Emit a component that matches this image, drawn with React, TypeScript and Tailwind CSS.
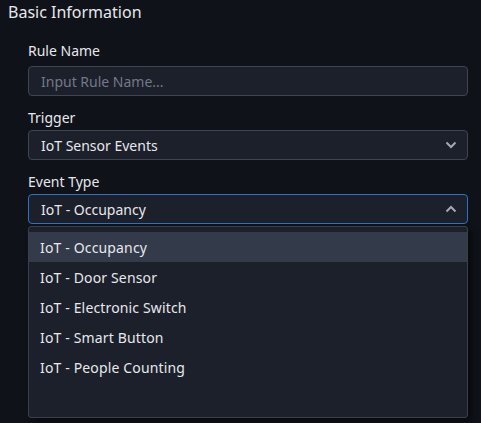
import { useState } from "react";

const eventTypes = [
    "IoT - Occupancy",
    "IoT - Door Sensor",
    "IoT - Electronic Switch",
    "IoT - Smart Button",
    "IoT - People Counting",
];

const Chevron = ({ up = false }: { up?: boolean }) => (
    <svg
        width="12"
        height="8"
        viewBox="0 0 12 8"
        fill="none"
        stroke="#a3a8b3"
        strokeWidth="2"
        className="shrink-0"
    >
        {up ? <path d="M1.5 6.5 6 2l4.5 4.5" /> : <path d="M1.5 1.5 6 6l4.5-4.5" />}
    </svg>
);

export default function App() {
    const [selected] = useState(eventTypes[0]);

    return (
        <div
            className="w-[481px] h-[423px] bg-[#10121a] text-[#e6e8ec] overflow-hidden"
            style={{ fontFamily: '"Noto Sans", "Open Sans", sans-serif' }}
        >
            <div className="pl-2 pt-[1px] text-[16px] leading-[22px]">Basic Information</div>

            <div className="pl-7 pr-[13px] pt-[18px] flex flex-col">
                {/* rule name */}
                <label className="text-[14px] leading-[20px]">Rule Name</label>
                <div className="mt-[5px] h-[30px] rounded-[4px] border border-[#404552] bg-[#1c202b] px-3 flex items-center text-[14px] text-[#737987]">
                    Input Rule Name...
                </div>

                {/* trigger */}
                <label className="mt-[12px] text-[14px] leading-[20px]">Trigger</label>
                <div className="mt-[2px] h-[30px] rounded-[4px] border border-[#404552] bg-[#1c202b] pl-3 pr-[10px] flex items-center justify-between text-[14px]">
                    <span>IoT Sensor Events</span>
                    <Chevron />
                </div>

                {/* event type */}
                <label className="mt-[12px] text-[14px] leading-[20px]">Event Type</label>
                <div className="mt-[2px] h-[30px] rounded-[4px] border border-[#2f72c4] bg-[#1c202b] pl-3 pr-[10px] flex items-center justify-between text-[14px]">
                    <span>{selected}</span>
                    <Chevron up />
                </div>

                <div className="mt-[2px] h-[192px] rounded-[3px] border border-[#3a3f4b] bg-[#1c202b] pt-[5px] shadow-[4px_4px_6px_rgba(0,0,0,0.45)]">
                    {eventTypes.map((t) => (
                        <div
                            key={t}
                            className={
                                "h-[30px] px-[11px] flex items-center text-[14px] tracking-[0.15px] " +
                                (t === selected ? "bg-[#333a4a]" : "")
                            }
                        >
                            {t}
                        </div>
                    ))}
                </div>
            </div>
        </div>
    );
}
